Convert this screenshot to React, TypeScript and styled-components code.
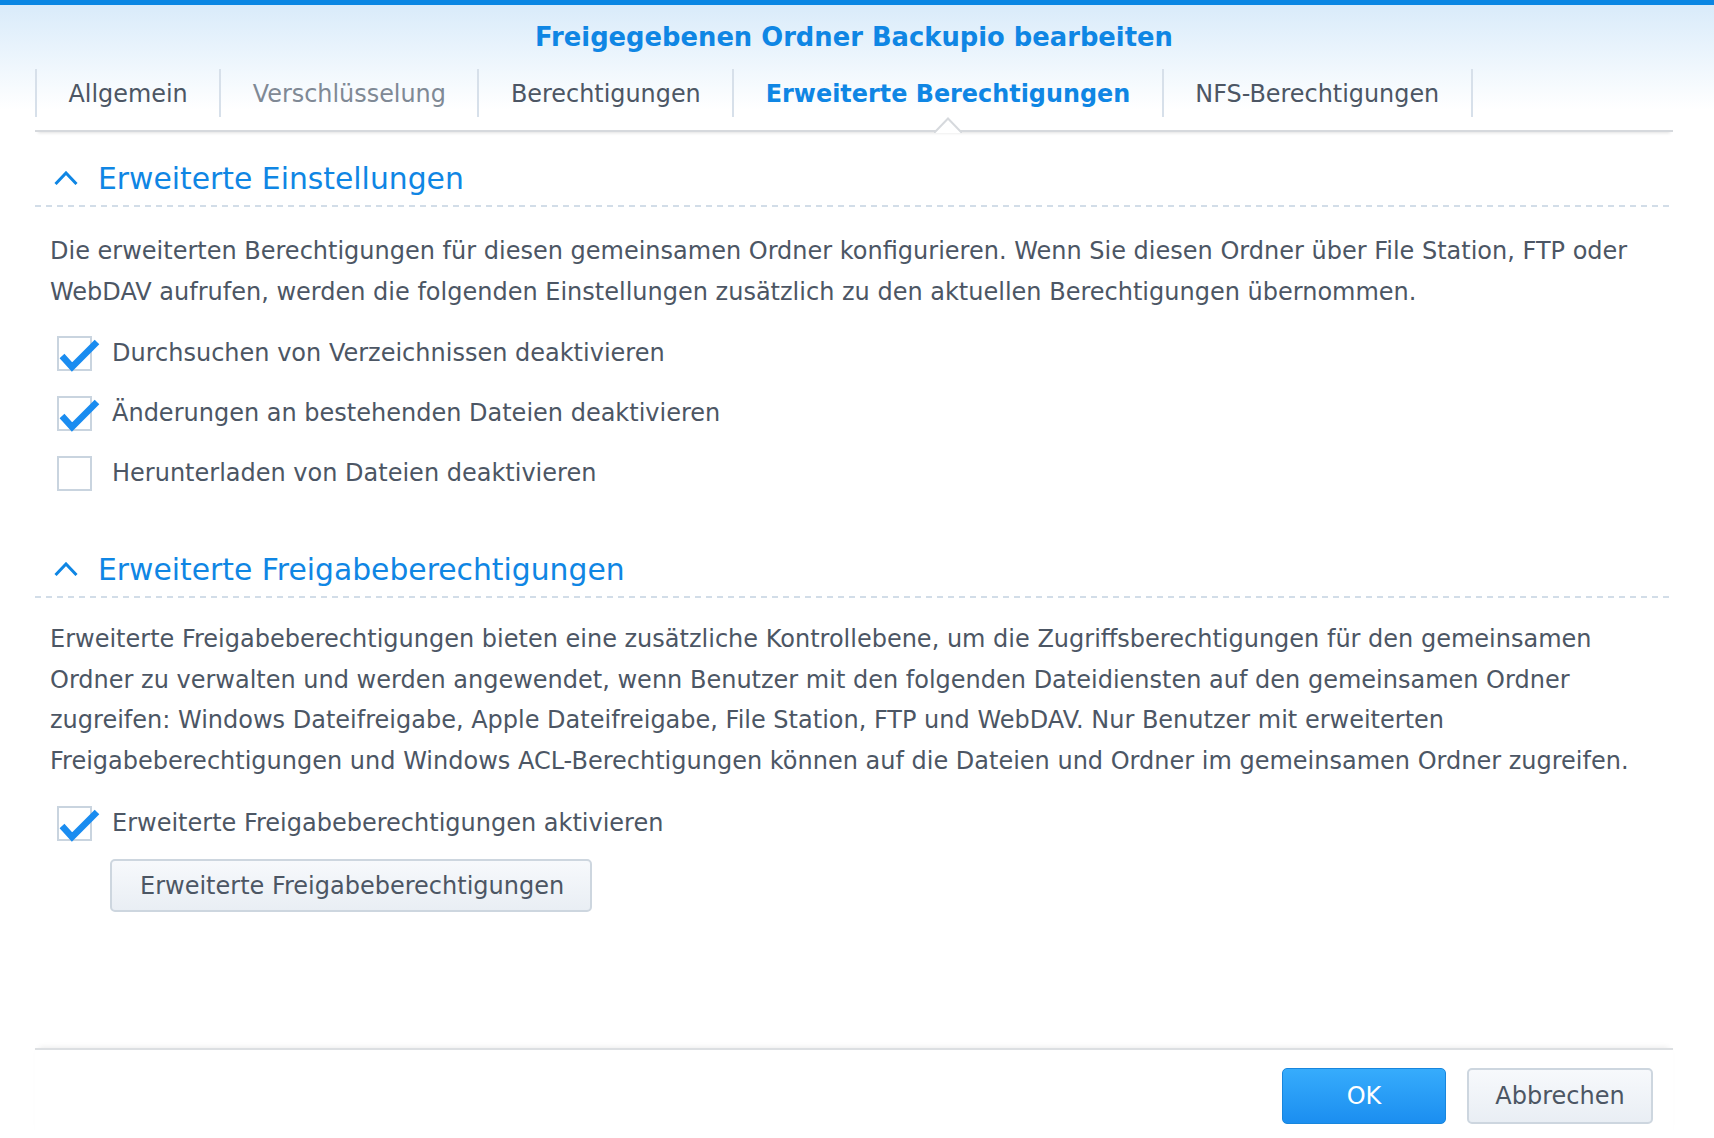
import React, { useState } from "react";
import styled, { createGlobalStyle } from "styled-components";

const GlobalStyle = createGlobalStyle`
  html, body {
    margin: 0;
    padding: 0;
    background: #ffffff;
  }
  body {
    font-family: "DejaVu Sans", Verdana, sans-serif;
    color: #4c5664;
  }
`;

const Dialog = styled.div`
  height: 1138px;
  display: flex;
  flex-direction: column;
  box-sizing: border-box;
  border-top: 5px solid #0a86e3;
  background: linear-gradient(to bottom, #d9ebfa 0px, #ffffff 105px, #ffffff 100%);
`;

const Title = styled.h1`
  margin: 12px 0 0;
  padding-right: 6px;
  height: 40px;
  line-height: 40px;
  text-align: center;
  font-size: 25.8px;
  font-weight: bold;
  color: #0f86e4;
`;

const TabBar = styled.div`
  display: flex;
  height: 61px;
  margin: 12px 41px 0 35px;
  border-bottom: 2px solid #d6d9dd;
  box-shadow: 0 4px 3px -3px rgba(0, 0, 0, 0.12);
`;

const Tab = styled.div<{ $active?: boolean; $disabled?: boolean }>`
  position: relative;
  display: flex;
  align-items: center;
  box-sizing: border-box;
  height: 48px;
  padding: 2px 31.5px 0;
  border-left: 2px solid #d7e0ea;
  font-size: 23.9px;
  font-weight: ${(p) => (p.$active ? "bold" : "normal")};
  color: ${(p) => (p.$active ? "#0f86e4" : p.$disabled ? "#7f8995" : "#4c5664")};
  white-space: nowrap;
  &:last-child {
    border-right: 2px solid #d7e0ea;
  }
`;

const Notch = styled.svg`
  position: absolute;
  left: 50%;
  top: 47px;
  transform: translateX(-50%);
  overflow: visible;
`;

const Content = styled.div`
  flex: 1;
  margin: 0 41px 0 35px;
`;

const SectionHead = styled.div<{ $top: number }>`
  display: flex;
  align-items: center;
  height: 40px;
  margin-top: ${(p) => p.$top}px;
  padding: 0 0 7px 19px;
  gap: 20px;
  font-size: 29.8px;
  color: #0f86e4;
`;

const Dashes = styled.div`
  height: 2px;
  background: repeating-linear-gradient(to right, #d2dde8 0 6px, transparent 6px 11px);
`;

const Paragraph = styled.p<{ $top: number }>`
  margin: ${(p) => p.$top}px 0 0;
  padding: 0 15px;
  font-size: 24px;
  line-height: 40.5px;
  white-space: nowrap;
`;

const Options = styled.div<{ $top: number }>`
  display: flex;
  flex-direction: column;
  margin-top: ${(p) => p.$top}px;
  padding-left: 22px;
`;

const OptionRow = styled.label`
  display: flex;
  align-items: center;
  height: 60px;
  gap: 20px;
  font-size: 24px;
  cursor: pointer;
`;

const Box = styled.span`
  position: relative;
  flex: none;
  width: 31px;
  height: 31px;
  border: 2px solid #c9d4df;
  background: #ffffff;
`;

const Tick = styled.svg`
  position: absolute;
  left: 0;
  top: -2px;
  overflow: visible;
`;

const LightButton = styled.button<{ $w: number; $h: number }>`
  width: ${(p) => p.$w}px;
  height: ${(p) => p.$h}px;
  border: 2px solid #cdd6df;
  border-radius: 5px;
  background: linear-gradient(to bottom, #f7f9fc, #e9eef4);
  font-family: "DejaVu Sans", Verdana, sans-serif;
  font-size: 24px;
  color: #4c5664;
  cursor: pointer;
`;

const SubButton = styled(LightButton)`
  margin: 6px 0 0 75px;
  text-align: left;
  padding: 0 0 0 28px;
`;

const Footer = styled.div`
  display: flex;
  justify-content: flex-end;
  gap: 21px;
  height: 90px;
  margin: 0 41px 0 35px;
  padding: 18px 20px 0 0;
  box-sizing: border-box;
  border-top: 2px solid #dcdfe2;
  box-shadow: 0 -4px 6px -4px rgba(0, 0, 0, 0.1);
`;

const PrimaryButton = styled.button`
  width: 164px;
  height: 56px;
  border: 1px solid #1886dd;
  border-radius: 5px;
  background: linear-gradient(to bottom, #36acfc, #1b8ef0);
  font-family: "DejaVu Sans", Verdana, sans-serif;
  font-size: 24px;
  color: #ffffff;
  cursor: pointer;
`;

const Chevron = () => (
  <svg width="24" height="14" viewBox="0 0 24 14">
    <polyline points="1.5,13 12,2 22.5,13" fill="none" stroke="#0f86e4" strokeWidth="3" />
  </svg>
);

const Checkbox = ({ checked }: { checked: boolean }) => (
  <Box>
    {checked && (
      <Tick width="40" height="36" viewBox="0 0 40 36">
        <polyline
          points="3,20 13,31 38,6"
          fill="none"
          stroke="#1a8cf0"
          strokeWidth="6.5"
          strokeLinejoin="miter"
        />
      </Tick>
    )}
  </Box>
);

const tabs = [
  { label: "Allgemein" },
  { label: "Verschlüsselung", disabled: true },
  { label: "Berechtigungen" },
  { label: "Erweiterte Berechtigungen", active: true },
  { label: "NFS-Berechtigungen" },
];

const App = () => {
  const [opts, setOpts] = useState([true, true, false, true]);
  const toggle = (i: number) => setOpts(opts.map((v, j) => (j === i ? !v : v)));

  return (
    <Dialog>
      <GlobalStyle />
      <Title>Freigegebenen Ordner Backupio bearbeiten</Title>
      <TabBar>
        {tabs.map((t) => (
          <Tab key={t.label} $active={t.active} $disabled={t.disabled}>
            {t.label}
            {t.active && (
              <Notch width="26" height="18" viewBox="0 0 26 18">
                <polygon points="-1,17 13,2 27,17" fill="#ffffff" />
                <polyline points="-1,16 0,16 13,2.5 26,16 27,16" fill="none" stroke="#d6d9dd" strokeWidth="2" />
              </Notch>
            )}
          </Tab>
        ))}
      </TabBar>

      <Content>
        <SectionHead $top={26}>
          <Chevron />
          Erweiterte Einstellungen
        </SectionHead>
        <Dashes />
        <Paragraph $top={24}>
          Die erweiterten Berechtigungen für diesen gemeinsamen Ordner konfigurieren. Wenn Sie diesen Ordner über File Station, FTP oder
          <br />
          WebDAV aufrufen, werden die folgenden Einstellungen zusätzlich zu den aktuellen Berechtigungen übernommen.
        </Paragraph>
        <Options $top={11}>
          {[
            "Durchsuchen von Verzeichnissen deaktivieren",
            "Änderungen an bestehenden Dateien deaktivieren",
            "Herunterladen von Dateien deaktivieren",
          ].map((label, i) => (
            <OptionRow key={label} onClick={() => toggle(i)}>
              <Checkbox checked={opts[i]} />
              {label}
            </OptionRow>
          ))}
        </Options>

        <SectionHead $top={46}>
          <Chevron />
          Erweiterte Freigabeberechtigungen
        </SectionHead>
        <Dashes />
        <Paragraph $top={21}>
          Erweiterte Freigabeberechtigungen bieten eine zusätzliche Kontrollebene, um die Zugriffsberechtigungen für den gemeinsamen
          <br />
          Ordner zu verwalten und werden angewendet, wenn Benutzer mit den folgenden Dateidiensten auf den gemeinsamen Ordner
          <br />
          zugreifen: Windows Dateifreigabe, Apple Dateifreigabe, File Station, FTP und WebDAV. Nur Benutzer mit erweiterten
          <br />
          Freigabeberechtigungen und Windows ACL-Berechtigungen können auf die Dateien und Ordner im gemeinsamen Ordner zugreifen.
        </Paragraph>
        <Options $top={12}>
          <OptionRow onClick={() => toggle(3)}>
            <Checkbox checked={opts[3]} />
            Erweiterte Freigabeberechtigungen aktivieren
          </OptionRow>
        </Options>
        <SubButton $w={482} $h={53}>Erweiterte Freigabeberechtigungen</SubButton>
      </Content>

      <Footer>
        <PrimaryButton>OK</PrimaryButton>
        <LightButton $w={186} $h={56}>Abbrechen</LightButton>
      </Footer>
    </Dialog>
  );
};

export default App;
